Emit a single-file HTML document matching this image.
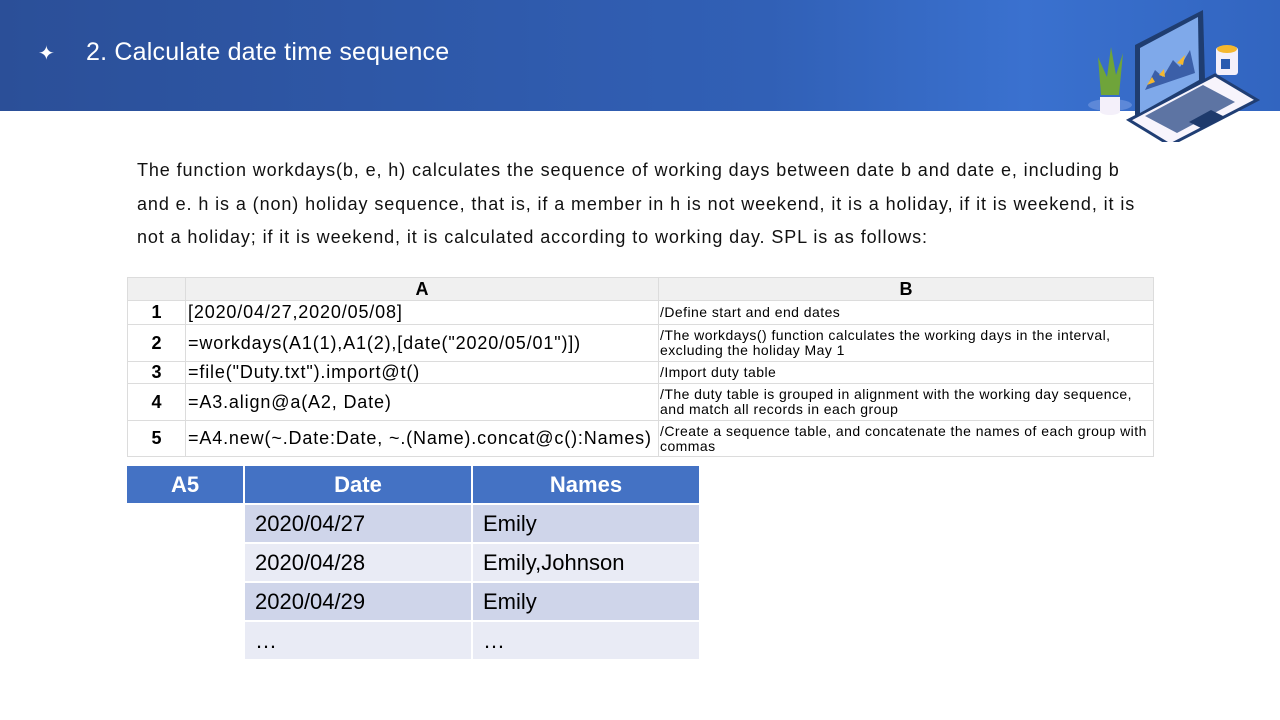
<!DOCTYPE html>
<html><head><meta charset="utf-8"><style>
*{margin:0;padding:0;box-sizing:border-box}
body{width:1280px;height:720px;background:#fff;position:relative;overflow:hidden;font-family:"Liberation Sans","DejaVu Sans",sans-serif}
.hdr{position:absolute;left:0;top:0;width:1280px;height:111px;background:linear-gradient(90deg,#2b4f98 0%,#3160b6 60%,#3a71cf 80%,#3265c0 100%)}
.hdr .t{position:absolute;left:86px;top:38px;color:#fff;font-size:25px;letter-spacing:0.2px}
.hdr .s{position:absolute;left:38px;top:41px;color:#fff;font-size:20px}
.p{position:absolute;left:137px;top:154px;width:1000px;font-size:18px;line-height:33.5px;color:#111;letter-spacing:0.9px}
.g{position:absolute;border-collapse:collapse;font-size:18px;table-layout:fixed}
.g td{border:1px solid #dcdcdc;padding:0 2px;vertical-align:middle;white-space:nowrap;overflow:hidden}
.g .code{letter-spacing:0.85px}
.g .h{background:#f0f0f0;font-weight:bold;text-align:center}
.g .n{font-weight:bold;text-align:center;background:#fff}
.g .c{font-size:14px;line-height:15px;white-space:normal;padding:0 1px;letter-spacing:0.45px}
.r{position:absolute;left:127px;top:466px;border-collapse:separate;border-spacing:2px 2px;margin-left:-2px;margin-top:-2px;font-size:22px}
.r td{height:37px;padding-left:10px}
.r .hd{background:#4472c4;color:#fff;font-weight:bold;text-align:center;padding:0}
.r .a{background:#cfd5ea}.r .b{background:#e9ebf5}
</style></head><body>
<div class="hdr"><span class="s">✦</span><span class="t">2. Calculate date time sequence</span>
<svg style="position:absolute;left:1085px;top:5px" width="175" height="137" viewBox="0 0 175 137">
<ellipse cx="25" cy="100" rx="22" ry="6" fill="#5d88d8"/>
<path d="M15 92h20v15c-3 4-17 4-20 0z" fill="#f4f0fa"/>
<path d="M16 90l-3-38 9 20 4-30 5 28 7-22-4 42z" fill="#6fa43a"/>
<path d="M44 115 L130 70 L172 95 L85 140z" fill="#f7f4fc" stroke="#203e74" stroke-width="3"/>
<path d="M50 112 L50 40 L118 5 L120 75z" fill="#1f3d70"/>
<path d="M55 108 L55 43 L113 12 L114 75z" fill="#7fa9ea"/>
<path d="M60 85 L70 65 L78 72 L88 55 L95 62 L105 45 L110 68z" fill="#3b5fa8"/>
<path d="M62 80l5-8 3 5zM74 70l5-6 1 8zM92 58l8-8-2 10z" fill="#f5b82e"/>
<path d="M60 111 L118 80 L150 97 L92 128z" fill="#2a4a86" opacity=".75"/>
<path d="M104 117l22-12 14 7-22 12z" fill="#1e3a6c"/>
<rect x="131" y="42" width="22" height="28" rx="3" fill="#f4f0fa"/>
<ellipse cx="142" cy="44" rx="10" ry="4" fill="#f5b82e"/>
<rect x="136" y="54" width="9" height="10" fill="#2a5bb0"/>
</svg></div>
<div class="p">The function workdays(b, e, h) calculates the sequence of working days between date b and date e, including b and e. h is a (non) holiday sequence, that is, if a member in h is not weekend, it is a holiday, if it is weekend, it is not a holiday; if it is weekend, it is calculated according to working day. SPL is as follows:</div>
<table class="g" style="left:127px;top:277px;width:1026px">
<col style="width:58px"><col style="width:473px"><col style="width:495px">
<tr style="height:23px"><td class="h"></td><td class="h">A</td><td class="h">B</td></tr>
<tr style="height:24px"><td class="n">1</td><td class="code">[2020/04/27,2020/05/08]</td><td class="c">/Define start and end dates</td></tr>
<tr style="height:37px"><td class="n">2</td><td class="code">=workdays(A1(1),A1(2),[date("2020/05/01")])</td><td class="c">/The workdays() function calculates the working days in the interval, excluding the holiday May 1</td></tr>
<tr style="height:22px"><td class="n">3</td><td class="code">=file("Duty.txt").import@t()</td><td class="c">/Import duty table</td></tr>
<tr style="height:37px"><td class="n">4</td><td class="code">=A3.align@a(A2, Date)</td><td class="c">/The duty table is grouped in alignment with the working day sequence, and match all records in each group</td></tr>
<tr style="height:36px"><td class="n">5</td><td class="code">=A4.new(~.Date:Date, ~.(Name).concat@c():Names)</td><td class="c">/Create a sequence table, and concatenate the names of each group with commas</td></tr>
</table>
<table class="r">
<tr><td class="hd" style="width:116px">A5</td><td class="hd" style="width:226px">Date</td><td class="hd" style="width:226px">Names</td></tr>
<tr><td></td><td class="a">2020/04/27</td><td class="a">Emily</td></tr>
<tr><td></td><td class="b">2020/04/28</td><td class="b">Emily,Johnson</td></tr>
<tr><td></td><td class="a">2020/04/29</td><td class="a">Emily</td></tr>
<tr><td></td><td class="b">…</td><td class="b">…</td></tr>
</table>
</body></html>
